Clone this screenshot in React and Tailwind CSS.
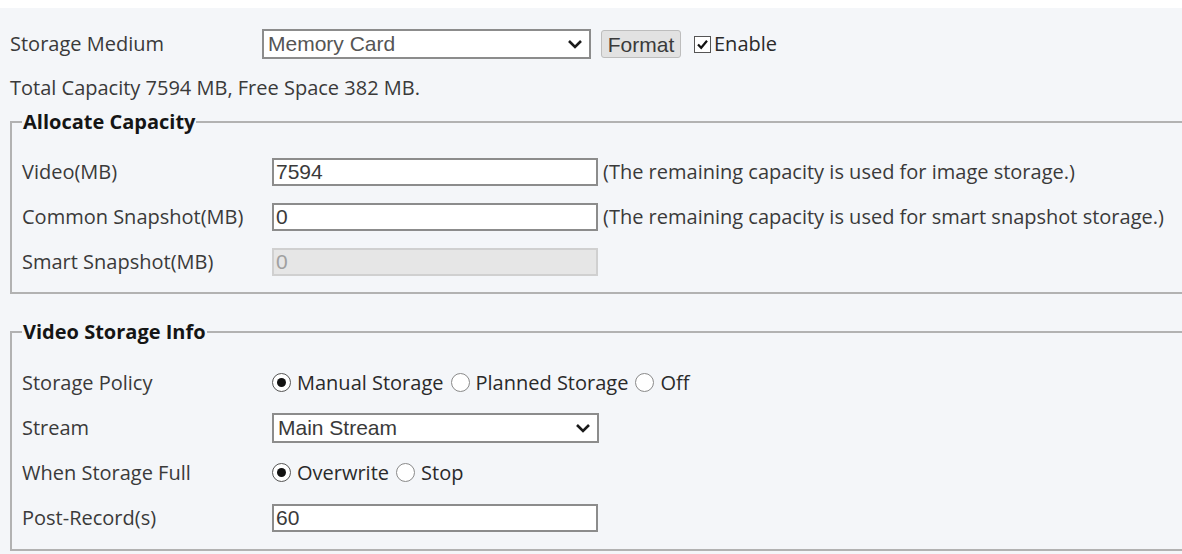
import { useState } from 'react';

const labelFont = { fontFamily: '"Open Sans", "Noto Sans", sans-serif' };

function Chevron() {
  return (
    <svg width="16" height="10" viewBox="0 0 16 10" className="shrink-0">
      <path d="M2 2 L8 8 L14 2" fill="none" stroke="#1a1a1a" strokeWidth="2.6" />
    </svg>
  );
}

function Select({ value, width, tone }) {
  return (
    <div className={`flex items-center justify-between h-[30px] ${width} bg-white border-2 border-[#8c8c8c] pl-[4px] pr-[6px] font-['Liberation_Sans',Arial,sans-serif] text-[21px] ${tone}`}>
      <span>{value}</span>
      <Chevron />
    </div>
  );
}

function TextBox({ value, disabled }) {
  return (
    <div className={`flex items-center h-[28px] w-[326px] border-2 pl-[2px] font-['Liberation_Sans',Arial,sans-serif] text-[21px] ${
      disabled ? 'bg-[#e6e6e6] border-[#d0d0d0] text-[#a0a0a0]' : 'bg-white border-[#8c8c8c] text-[#3a3a3a]'
    }`}>
      {value}
    </div>
  );
}

function Radio({ checked, label, onClick }) {
  return (
    <button onClick={onClick} className="flex items-center gap-[6px] text-[#2a2a2a]">
      <span className={`flex items-center justify-center w-[19px] h-[19px] rounded-full border-[1.5px] bg-white ${checked ? 'border-[#555]' : 'border-[#8a8a8a]'}`}>
        {checked && <span className="w-[9px] h-[9px] rounded-full bg-[#111]" />}
      </span>
      <span>{label}</span>
    </button>
  );
}

function Row({ label, children }) {
  return (
    <div className="flex items-center h-[45px]">
      <div className="w-[250px] shrink-0 text-[#3a3a3a]">{label}</div>
      {children}
    </div>
  );
}

function Group({ title, children, className }) {
  return (
    <fieldset className={`w-[1200px] ml-[10px] border-2 border-[#b2b2b2] pl-[10px] ${className}`}>
      <legend className="px-[1px] font-bold text-[#151515] text-[20px] leading-[28px]">{title}</legend>
      {children}
    </fieldset>
  );
}

export default function App() {
  const [policy, setPolicy] = useState('manual');
  const [full, setFull] = useState('overwrite');
  const [enabled, setEnabled] = useState(true);

  return (
    <div className="w-[1182px] h-[554px] overflow-hidden bg-white text-[20px] leading-[28px]" style={labelFont}>
      <div className="h-[8px] bg-white" />
      <div className="h-[546px] bg-[#f4f6f9] pt-[21px]">
        {/* Storage medium */}
        <div className="flex items-center pl-[10px] h-[30px]">
          <div className="w-[252px] text-[#3a3a3a]">Storage Medium</div>
          <Select value="Memory Card" width="w-[329px]" tone="text-[#555]" />
          <button className="ml-[10px] h-[28px] w-[80px] bg-[#e2e2e2] border border-[#bdbdbd] rounded-[3px] font-['Liberation_Sans',Arial,sans-serif] text-[21px] text-[#3a3a3a]">
            Format
          </button>
          <button onClick={() => setEnabled(!enabled)} className="flex items-center ml-[13px] gap-[3px] text-[#2a2a2a]">
            <span className="flex items-center justify-center w-[17px] h-[17px] border-[1.5px] border-[#555] bg-white">
              {enabled && (
                <svg width="13" height="13" viewBox="0 0 13 13">
                  <path d="M2 6.5 L5.2 9.8 L11 2.8" fill="none" stroke="#111" strokeWidth="2.2" />
                </svg>
              )}
            </span>
            Enable
          </button>
        </div>
        <div className="pl-[10px] mt-[15px] text-[#3a3a3a]">Total Capacity 7594 MB, Free Space 382 MB.</div>

        {/* Allocate capacity */}
        <Group title="Allocate Capacity" className="mt-[6px] pt-[13px] pb-[8px]">
          <Row label="Video(MB)">
            <TextBox value="7594" />
            <span className="ml-[5px] text-[#3a3a3a]">(The remaining capacity is used for image storage.)</span>
          </Row>
          <Row label="Common Snapshot(MB)">
            <TextBox value="0" />
            <span className="ml-[5px] text-[#3a3a3a]">(The remaining capacity is used for smart snapshot storage.)</span>
          </Row>
          <Row label="Smart Snapshot(MB)">
            <TextBox value="0" disabled />
          </Row>
        </Group>

        {/* Video storage info */}
        <Group title="Video Storage Info" className="mt-[24px] pt-[14px] pb-[9px]">
          <Row label="Storage Policy">
            <div className="flex items-center gap-[7px]">
              <Radio checked={policy === 'manual'} label="Manual Storage" onClick={() => setPolicy('manual')} />
              <Radio checked={policy === 'planned'} label="Planned Storage" onClick={() => setPolicy('planned')} />
              <Radio checked={policy === 'off'} label="Off" onClick={() => setPolicy('off')} />
            </div>
          </Row>
          <Row label="Stream">
            <Select value="Main Stream" width="w-[327px]" tone="text-[#3a3a3a]" />
          </Row>
          <Row label="When Storage Full">
            <div className="flex items-center gap-[7px]">
              <Radio checked={full === 'overwrite'} label="Overwrite" onClick={() => setFull('overwrite')} />
              <Radio checked={full === 'stop'} label="Stop" onClick={() => setFull('stop')} />
            </div>
          </Row>
          <Row label="Post-Record(s)">
            <TextBox value="60" />
          </Row>
        </Group>
      </div>
    </div>
  );
}
